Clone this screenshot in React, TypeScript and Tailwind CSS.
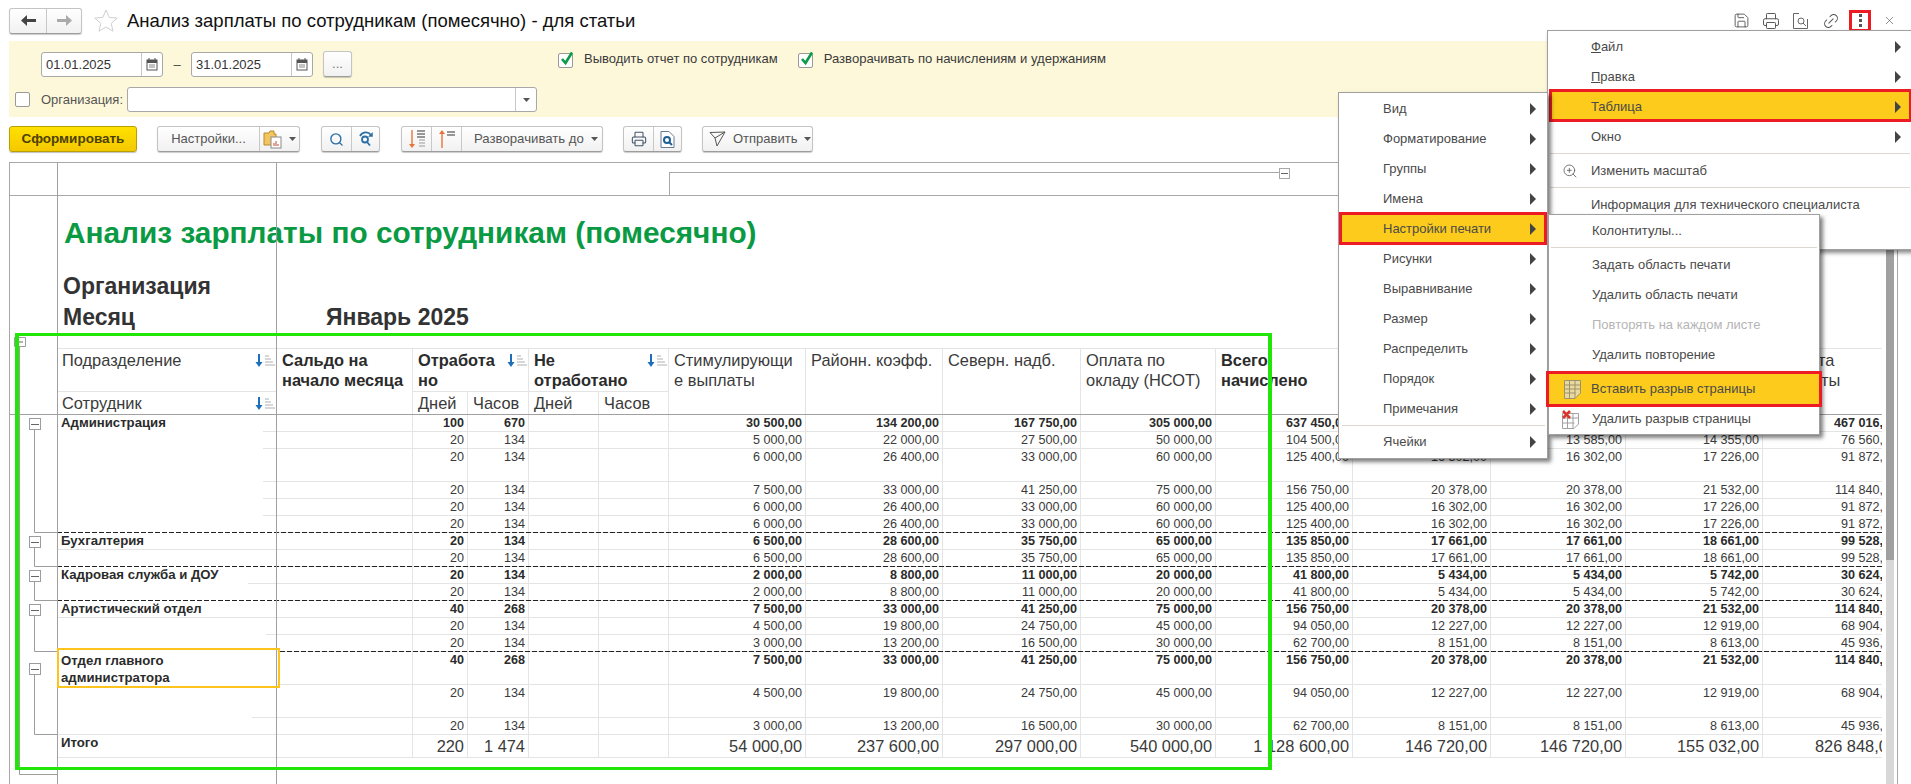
import { Link2, Printer, Save, Search, X, ZoomIn } from "lucide-react";
import type { ReactNode } from "react";

type Row = {
  h: string;
  bold?: boolean;
  big?: boolean;
  label?: string;
  line: string;
  days: string;
  hours: string;
  values: string[];
};

const adminA = ["6 000,00", "26 400,00", "33 000,00", "60 000,00", "125 400,00", "16 302,00", "16 302,00", "17 226,00", "91 872,00"];
const half = ["7 500,00", "33 000,00", "41 250,00", "75 000,00", "156 750,00", "20 378,00", "20 378,00", "21 532,00", "114 840,00"];
const buh = ["6 500,00", "28 600,00", "35 750,00", "65 000,00", "135 850,00", "17 661,00", "17 661,00", "18 661,00", "99 528,00"];
const kadr = ["2 000,00", "8 800,00", "11 000,00", "20 000,00", "41 800,00", "5 434,00", "5 434,00", "5 742,00", "30 624,00"];
const art1 = ["4 500,00", "19 800,00", "24 750,00", "45 000,00", "94 050,00", "12 227,00", "12 227,00", "12 919,00", "68 904,00"];
const art2 = ["3 000,00", "13 200,00", "16 500,00", "30 000,00", "62 700,00", "8 151,00", "8 151,00", "8 613,00", "45 936,00"];

const rows: Row[] = [
  { h: "h-[17px]", bold: true, label: "Администрация", line: "left-[206px]", days: "100", hours: "670", values: ["30 500,00", "134 200,00", "167 750,00", "305 000,00", "637 450,00", "82 869,00", "82 869,00", "87 565,00", "467 016,00"] },
  { h: "h-[17px]", line: "left-[206px]", days: "20", hours: "134", values: ["5 000,00", "22 000,00", "27 500,00", "50 000,00", "104 500,00", "13 585,00", "13 585,00", "14 355,00", "76 560,00"] },
  { h: "h-[33px]", line: "left-[206px]", days: "20", hours: "134", values: adminA },
  { h: "h-[17px]", line: "left-[206px]", days: "20", hours: "134", values: half },
  { h: "h-[17px]", line: "left-[206px]", days: "20", hours: "134", values: adminA },
  { h: "h-[17px]", line: "hidden", days: "20", hours: "134", values: adminA },
  { h: "h-[17px]", bold: true, label: "Бухгалтерия", line: "left-0", days: "20", hours: "134", values: buh },
  { h: "h-[17px]", line: "hidden", days: "20", hours: "134", values: buh },
  { h: "h-[17px]", bold: true, label: "Кадровая служба и ДОУ", line: "left-[191px]", days: "20", hours: "134", values: kadr },
  { h: "h-[17px]", line: "hidden", days: "20", hours: "134", values: kadr },
  { h: "h-[17px]", bold: true, label: "Артистический отдел", line: "left-0", days: "40", hours: "268", values: half },
  { h: "h-[17px]", line: "left-[209px]", days: "20", hours: "134", values: art1 },
  { h: "h-[17px]", line: "hidden", days: "20", hours: "134", values: art2 },
  { h: "h-[33px]", bold: true, line: "hidden", days: "40", hours: "268", values: half },
  { h: "h-[33px]", line: "left-[195px]", days: "20", hours: "134", values: art1 },
  { h: "h-[17px]", line: "left-0", days: "20", hours: "134", values: art2 },
  { h: "h-[23px]", big: true, label: "Итого", line: "left-0", days: "220", hours: "1 474", values: ["54 000,00", "237 600,00", "297 000,00", "540 000,00", "1 128 600,00", "146 720,00", "146 720,00", "155 032,00", "826 848,00"] },
];

const menuMain = ["Вид", "Форматирование", "Группы", "Имена"];
const menuRest = ["Рисунки", "Выравнивание", "Размер", "Распределить", "Порядок", "Примечания"];

function Arrow({ className = "" }: { className?: string }) {
  return (
    <svg className={`h-[12px] w-[6px] shrink-0 ${className}`} viewBox="0 0 6 12">
      <path d="M0 0l6 6-6 6z" fill="#444" />
    </svg>
  );
}

function Caret() {
  return (
    <svg className="h-[4px] w-[7px] shrink-0" viewBox="0 0 7 4">
      <path d="M0 0h7L3.5 4z" fill="#555" />
    </svg>
  );
}

function Calendar() {
  return (
    <svg className="h-[13px] w-[12px]" viewBox="0 0 12 13">
      <rect x="1" y="2" width="10" height="10" fill="#fff" stroke="#555" />
      <rect x="1" y="2" width="10" height="3" fill="#555" />
      <path d="M3 0v3M9 0v3" stroke="#555" />
      <path d="M3 7h6M3 9h6" stroke="#888" />
    </svg>
  );
}

function Check() {
  return (
    <span className="relative block h-[15px] w-[15px] rounded-[2px] border border-[#9a9a9a] bg-white">
      <svg className="absolute -top-[3px] left-[1px] h-[15px] w-[14px]" viewBox="0 0 14 15">
        <path d="M2 8l3.5 4L12 1.5" fill="none" stroke="#0a9a4a" strokeWidth="2.6" />
      </svg>
    </span>
  );
}

function SortIcon() {
  return (
    <svg className="absolute right-[1px] top-[5px] h-[13px] w-[20px]" viewBox="0 0 20 13">
      <path d="M4 0v10" stroke="#1c6fb8" strokeWidth="2" />
      <path d="M0.5 8l3.5 5 3.5-5z" fill="#1c6fb8" />
      <path d="M10 2h4M10 5h6M10 8h8M10 11h10" stroke="#b0b0b0" />
    </svg>
  );
}

function Btn({ className = "", children }: { className?: string; children: ReactNode }) {
  return (
    <div className={`flex h-[26px] items-center overflow-hidden rounded-[3px] border border-[#c4c4c4] border-b-[#9c9c9c] bg-gradient-to-b from-white to-[#f1f1f1] shadow-[0_1px_1px_rgba(0,0,0,0.2)] ${className}`}>
      {children}
    </div>
  );
}

function Part({ className = "", children }: { className?: string; children: ReactNode }) {
  return <div className={`flex h-full items-center justify-center border-r border-[#c8c8c8] last:border-r-0 ${className}`}>{children}</div>;
}

function MenuRow({ icon, arrow, muted, children }: { icon?: ReactNode; arrow?: boolean; muted?: boolean; children: ReactNode }) {
  return (
    <div className={`flex h-[30px] items-center ${muted ? "text-[#b5b5b5]" : "text-[#4a4a4a]"}`}>
      <span className="flex w-[43px] shrink-0 justify-center">{icon}</span>
      <span className="flex-1 whitespace-nowrap">{children}</span>
      {arrow && <Arrow className="mr-[11px]" />}
    </div>
  );
}

function Cell({ row, value, last }: { row: Row; value: string; last?: boolean }) {
  const weight = row.bold ? "font-bold text-[#2b2b2b]" : "text-[#3a3a3a]";
  const size = row.big ? "text-[16.4px] leading-[22px]" : "text-[12.6px] leading-[16px]";
  return (
    <td className={`whitespace-nowrap border-b border-[#e4e4e4] p-0 pr-[3px] text-right align-top ${last ? "" : "border-r"} ${weight} ${size}`}>
      {value}
    </td>
  );
}

export default function App() {
  const head = "border-b border-r border-t border-[#e4e4e4] p-0 pl-[5px] pt-[1px] text-left align-top text-[16.4px] leading-[20px] font-normal text-[#3a3a3a]";
  const headBold = "border-b border-r border-t border-[#e4e4e4] p-0 pl-[5px] pt-[1px] text-left align-top text-[16.4px] leading-[20px] font-bold text-[#2b2b2b]";
  const sub = "border-b border-r border-[#e4e4e4] border-b-[#a0a0a0] p-0 pl-[5px] text-left align-middle text-[16.4px] leading-[20px] font-normal text-[#3a3a3a]";

  return (
    <div className="relative h-[784px] w-[1911px] overflow-hidden bg-white font-['Liberation_Sans',sans-serif] text-[13px] text-[#4a4a4a]">
      {/* Title bar */}
      <header className="flex h-[41px] items-center pl-[9px] pr-[15px]">
        <Btn className="h-[24px] w-[73px]">
          <Part className="w-[37px]">
            <svg className="h-[11px] w-[15px]" viewBox="0 0 15 11">
              <path d="M0 5.5L6 0v4h9v3H6v4z" fill="#444" />
            </svg>
          </Part>
          <Part className="flex-1">
            <svg className="h-[11px] w-[15px]" viewBox="0 0 15 11">
              <path d="M15 5.5L9 0v4H0v3h9v4z" fill="#aaa" />
            </svg>
          </Part>
        </Btn>
        <svg className="ml-[12px] h-[23px] w-[24px]" viewBox="0 0 24 23">
          <path d="M12 1l3.2 7.4 8 .7-6 5.3 1.8 7.8L12 18l-7 4.2 1.8-7.8-6-5.3 8-.7z" fill="none" stroke="#cfcfcf" />
        </svg>
        <h1 className="ml-[9px] text-[18.5px] font-normal text-[#111]">Анализ зарплаты по сотрудникам (помесячно) - для статьи</h1>
        <div className="ml-auto flex items-center text-[#555]">
          <Save size={17} strokeWidth={1.3} />
          <Printer size={18} strokeWidth={1.3} className="ml-[12px]" />
          <svg className="ml-[13px] h-[16px] w-[15px]" viewBox="0 0 15 16" fill="none" stroke="#666">
            <path d="M6 .5H.5v15h14V6" />
            <circle cx="8" cy="8" r="3" />
            <path d="M10 10l3 3" />
          </svg>
          <Link2 size={18} strokeWidth={1.3} className="ml-[14px] -rotate-45" />
          <div className="ml-[9px] flex h-[22px] w-[22px] flex-col items-center justify-center gap-[2px] border-[3px] border-[#ed1c24] bg-white">
            <span className="h-[3px] w-[3px] bg-[#555]" />
            <span className="h-[3px] w-[3px] bg-[#555]" />
            <span className="h-[3px] w-[3px] bg-[#555]" />
          </div>
          <X size={13} strokeWidth={1.2} className="ml-[12px]" />
        </div>
      </header>

      {/* Filters */}
      <section className="ml-[9px] h-[76px] bg-[#fef8da] pt-[11px]">
        <div className="flex h-[25px] items-start pl-[32px]">
          <div className="flex h-[25px] w-[122px] items-center rounded-[3px] border border-[#a8a8a8] bg-white pl-[4px]">
            <span className="flex-1 text-[#333]">01.01.2025</span>
            <span className="flex h-full w-[21px] items-center justify-center border-l border-[#c8c8c8]">
              <Calendar />
            </span>
          </div>
          <span className="mt-[3px] w-[28px] text-center">–</span>
          <div className="flex h-[25px] w-[122px] items-center rounded-[3px] border border-[#a8a8a8] bg-white pl-[4px]">
            <span className="flex-1 text-[#333]">31.01.2025</span>
            <span className="flex h-full w-[21px] items-center justify-center border-l border-[#c8c8c8]">
              <Calendar />
            </span>
          </div>
          <Btn className="-mt-px ml-[10px] w-[29px] justify-center text-[#777]">...</Btn>
          <div className="ml-[206px] flex items-center">
            <Check />
            <span className="ml-[11px] -mt-[3px] text-[#3a3a3a]">Выводить отчет по сотрудникам</span>
          </div>
          <div className="ml-[20px] flex items-center">
            <Check />
            <span className="ml-[11px] -mt-[3px] text-[13.1px] text-[#3a3a3a]">Разворачивать по начислениям и удержаниям</span>
          </div>
        </div>
        <div className="mt-[10px] flex h-[25px] items-center pl-[6px]">
          <span className="h-[15px] w-[15px] rounded-[2px] border border-[#9a9a9a] bg-white" />
          <span className="ml-[11px] w-[86px] text-[#555]">Организация:</span>
          <div className="flex h-[25px] w-[410px] items-center justify-end rounded-[3px] border border-[#a8a8a8] bg-white">
            <span className="flex h-full w-[21px] items-center justify-center border-l border-[#c8c8c8]">
              <Caret />
            </span>
          </div>
        </div>
      </section>

      {/* Toolbar */}
      <nav className="mt-[9px] flex h-[26px] items-center pl-[9px]">
        <div className="flex h-[26px] w-[128px] items-center justify-center rounded-[3px] border border-[#b8a000] bg-gradient-to-b from-[#ffe100] to-[#f4c800] text-[13.5px] font-bold text-[#4d4000] shadow-[0_1px_1px_rgba(0,0,0,0.25)]">
          Сформировать
        </div>
        <Btn className="ml-[20px] w-[143px]">
          <Part className="w-[102px] text-[#555]">Настройки...</Part>
          <Part className="flex-1 gap-[6px]">
            <svg className="h-[19px] w-[20px]" viewBox="0 0 20 19">
              <path d="M1 3h5l1-2h4v3h2v11H1z" fill="#f2c560" stroke="#b98a2a" />
              <rect x="8" y="7" width="10" height="11" fill="#fff" stroke="#8a8a8a" />
              <path d="M11 16v-3M13 16v-5M15 16v-2" stroke="#c04a2a" />
            </svg>
            <Caret />
          </Part>
        </Btn>
        <Btn className="ml-[21px] w-[59px]">
          <Part className="w-[30px]">
            <Search size={15} strokeWidth={2.2} color="#2b6ea6" />
          </Part>
          <Part className="flex-1">
            <svg className="h-[16px] w-[16px]" viewBox="0 0 16 16" fill="none" stroke="#2b6ea6" strokeWidth="1.8">
              <path d="M2 5a6.5 6.5 0 0 1 11-1" />
              <path d="M14.5 1.5v4h-4z" fill="#2b6ea6" strokeWidth="0.5" />
              <circle cx="7" cy="8.5" r="3" />
              <path d="M9 11l3 3.5" />
            </svg>
          </Part>
        </Btn>
        <Btn className="ml-[21px] w-[202px]">
          <Part className="w-[30px]">
            <svg className="h-[20px] w-[18px]" viewBox="0 0 18 20">
              <path d="M4 1v16" stroke="#e8743b" strokeWidth="1.4" />
              <path d="M1 15l3 4 3-4z" fill="#e8743b" />
              <path d="M9 2h8M9 5h8M9 8h8" stroke="#333" />
              <path d="M11 11h6M11 14h6M11 17h6" stroke="#999" />
            </svg>
          </Part>
          <Part className="w-[30px]">
            <svg className="h-[20px] w-[18px]" viewBox="0 0 18 20">
              <path d="M4 3v16" stroke="#e8743b" strokeWidth="1.4" />
              <path d="M1 5l3-4 3 4z" fill="#e8743b" />
              <path d="M9 3h8M9 6h8" stroke="#333" />
            </svg>
          </Part>
          <Part className="flex-1 justify-start gap-[7px] pl-[12px] text-[13.2px] text-[#555]">
            Разворачивать до
            <Caret />
          </Part>
        </Btn>
        <Btn className="ml-[20px] w-[59px]">
          <Part className="w-[30px]">
            <Printer size={16} strokeWidth={1.6} color="#44566a" />
          </Part>
          <Part className="flex-1">
            <svg className="h-[17px] w-[15px]" viewBox="0 0 15 17" fill="none">
              <path d="M1 .5h8l5 5v11H1z" stroke="#6a7d90" fill="#fff" />
              <circle cx="7" cy="9" r="3" stroke="#1f5f96" strokeWidth="2" />
              <path d="M9 11l3 3" stroke="#1f5f96" strokeWidth="2" />
            </svg>
          </Part>
        </Btn>
        <Btn className="ml-[20px] w-[111px] gap-[7px] pl-[6px] text-[#555]">
          <svg className="h-[16px] w-[17px]" viewBox="0 0 17 16" fill="none" stroke="#555">
            <path d="M1 1.5L16 1 8 15 6 7z" />
            <path d="M6 7l10-6" />
          </svg>
          Отправить
          <Caret />
        </Btn>
      </nav>

      {/* Spreadsheet */}
      <main className="ml-[9px] mt-[10px] flex h-[622px] w-[1889px] border-l border-r border-t border-[#a8a8a8]">
        <div className="relative w-[1872px] shrink-0 overflow-hidden">
          <div className="h-[33px] border-b border-[#a8a8a8] pt-[9px]">
            <div className="relative ml-[659px] h-[23px] w-[610px] border-l border-t border-[#a8a8a8]">
              <span className="absolute -right-[11px] -top-[5px] flex h-[11px] w-[11px] items-center justify-center border border-[#a8a8a8] bg-white">
                <span className="h-px w-[7px] bg-[#666]" />
              </span>
            </div>
          </div>

          <div className="flex h-[74px] items-center pl-[54px] pt-[1px] text-[29.8px] font-bold text-[#0a9a44]">
            Анализ зарплаты по сотрудникам (помесячно)
          </div>
          <div className="flex h-[32px] items-center pl-[53px] text-[23px] font-bold text-[#333]">Организация</div>
          <div className="flex h-[30px] items-center pl-[53px] text-[23px] font-bold text-[#333]">
            <span className="w-[263px]">Месяц</span>
            <span>Январь 2025</span>
          </div>
          <div className="h-[16px]" />

          <table className="ml-[47px] w-[1823px] table-fixed border-separate border-spacing-0">
            <colgroup>
              <col className="w-[220px]" />
              <col className="w-[136px]" />
              <col className="w-[55px]" />
              <col className="w-[61px]" />
              <col className="w-[70px]" />
              <col className="w-[70px]" />
              <col className="w-[137px]" />
              <col className="w-[137px]" />
              <col className="w-[138px]" />
              <col className="w-[135px]" />
              <col className="w-[137px]" />
              <col className="w-[138px]" />
              <col className="w-[135px]" />
              <col className="w-[137px]" />
              <col className="w-[137px]" />
            </colgroup>
            <thead>
              <tr className="h-[44px]">
                <th className={`relative ${head}`}>
                  Подразделение
                  <SortIcon />
                </th>
                <th rowSpan={2} className={`${headBold} border-b-[#a0a0a0]`}>
                  Сальдо на
                  <br />
                  начало месяца
                </th>
                <th colSpan={2} className={`relative ${headBold}`}>
                  Отработа
                  <br />
                  но
                  <SortIcon />
                </th>
                <th colSpan={2} className={`relative ${headBold}`}>
                  Не
                  <br />
                  отработано
                  <SortIcon />
                </th>
                <th rowSpan={2} className={`${head} border-b-[#a0a0a0]`}>
                  Стимулирующи
                  <br />е выплаты
                </th>
                <th rowSpan={2} className={`${head} border-b-[#a0a0a0]`}>Районн. коэфф.</th>
                <th rowSpan={2} className={`${head} border-b-[#a0a0a0]`}>Северн. надб.</th>
                <th rowSpan={2} className={`${head} border-b-[#a0a0a0]`}>
                  Оплата по
                  <br />
                  окладу (НСОТ)
                </th>
                <th rowSpan={2} className={`${headBold} border-b-[#a0a0a0]`}>
                  Всего
                  <br />
                  начислено
                </th>
                <th rowSpan={2} className={`${head} border-b-[#a0a0a0]`}>НДФЛ</th>
                <th rowSpan={2} className={`${head} border-b-[#a0a0a0]`}>Прочие</th>
                <th rowSpan={2} className={`${head} border-b-[#a0a0a0]`}>Удержания</th>
                <th rowSpan={2} className={`${head} border-b-[#a0a0a0]`}>
                  Выплата
                  <br />
                  зарплаты
                </th>
              </tr>
              <tr className="h-[23px]">
                <th className={`relative ${sub}`}>
                  Сотрудник
                  <SortIcon />
                </th>
                <th className={sub}>Дней</th>
                <th className={sub}>Часов</th>
                <th className={sub}>Дней</th>
                <th className={sub}>Часов</th>
              </tr>
            </thead>
            <tbody>
              {rows.map((row, i) => (
                <tr key={i} className={row.h}>
                  <td className="relative whitespace-nowrap p-0 pl-[4px] align-top text-[13.2px] font-bold leading-[16px] text-[#2b2b2b]">
                    {row.label}
                    <span className={`absolute bottom-0 right-0 h-px bg-[#e4e4e4] ${row.line}`} />
                  </td>
                  <td className="border-b border-r border-[#e4e4e4] p-0" />
                  <Cell row={row} value={row.days} />
                  <Cell row={row} value={row.hours} />
                  <td className="border-b border-r border-[#e4e4e4] p-0" />
                  <td className="border-b border-r border-[#e4e4e4] p-0" />
                  {row.values.map((v, j) => (
                    <Cell key={j} row={row} value={v} last={j === row.values.length - 1} />
                  ))}
                </tr>
              ))}
            </tbody>
          </table>

          {/* Outline tree in the gutter, in page coordinates */}
          <svg className="absolute left-0 top-0 h-[621px] w-[47px]" viewBox="10 163 47 621" fill="none" stroke="#9c9c9c">
            <path d="M19.5 346V774.5H57" />
            <path d="M34.5 430V532.5H57M34.5 548V566.5H57M34.5 582V600.5H57M34.5 616V651.5H57M34.5 675V734.5H57" />
            <path d="M14.5 337.5h11v9h-11z" fill="#fff" />
            <path d="M17 342h6" stroke="#666" />
            {[418, 536, 570, 604, 663].map((y) => (
              <g key={y}>
                <rect x="29.5" y={y + 0.5} width="11" height="11" fill="#fff" />
                <path d={`M31 ${y + 6.5}h8`} stroke="#666" />
              </g>
            ))}
          </svg>

          {/* Page break lines */}
          <span className="absolute left-[47px] right-0 top-[369px] h-px bg-[repeating-linear-gradient(90deg,#222_0,#222_5px,transparent_5px,transparent_7px)]" />
          <span className="absolute left-[47px] right-0 top-[403px] h-px bg-[repeating-linear-gradient(90deg,#222_0,#222_5px,transparent_5px,transparent_7px)]" />
          <span className="absolute left-[47px] right-0 top-[437px] h-px bg-[repeating-linear-gradient(90deg,#222_0,#222_5px,transparent_5px,transparent_7px)]" />
          <span className="absolute left-[270px] right-0 top-[488px] h-px bg-[repeating-linear-gradient(90deg,#222_0,#222_5px,transparent_5px,transparent_7px)]" />

          {/* Grey line under the header, sheet columns */}
          <span className="absolute left-0 right-0 top-[251px] h-px bg-[#a0a0a0]" />
          <span className="absolute bottom-0 left-[47px] top-0 w-px bg-[#a0a0a0]" />
          <span className="absolute bottom-0 left-[266px] top-0 w-px bg-[#a0a0a0]" />

          {/* Active cell */}
          <div className="absolute left-[47px] top-[485px] h-[40px] w-[223px] border-2 border-[#fcc41c] pl-[2px] pt-[2px] text-[13.2px] font-bold leading-[17px] text-[#2b2b2b]">
            Отдел главного
            <br />
            администратора
          </div>

          {/* Annotation frame */}
          <div className="absolute left-[5px] top-[170px] h-[437px] w-[1257px] border-x-4 border-y-[3px] border-[#22e608]" />
        </div>

        <div className="ml-[4px] flex w-[8px] flex-col bg-[#d8d8d8]">
          <div className="h-[397px] bg-[#a0a0a0]" />
        </div>
      </main>

      {/* Main menu */}
      <div className="absolute left-[1547px] top-[30px] z-10 h-[220px] w-[366px] border border-[#a0a0a0] bg-white pt-px shadow-[2px_3px_4px_rgba(0,0,0,0.45)]">
        <MenuRow arrow>
          <span className="underline">Ф</span>айл
        </MenuRow>
        <MenuRow arrow>
          <span className="underline">П</span>равка
        </MenuRow>
        <div className="-mt-[3px] ml-px flex h-[33px] items-center border-[3px] border-[#ed1c24] bg-[#fccb1c] pt-[3px] text-[#4a4a4a]">
          <span className="ml-[39px] flex-1">Таблица</span>
          <Arrow className="mr-[8px]" />
        </div>
        <MenuRow arrow>Окно</MenuRow>
        <div className="mx-[2px] mb-[2px] mt-[1px] h-px bg-[#dcd8d0]" />
        <MenuRow icon={<ZoomIn size={16} strokeWidth={1.2} color="#555" />}>Изменить масштаб</MenuRow>
        <div className="mx-[2px] mb-[2px] mt-px h-px bg-[#dcd8d0]" />
        <MenuRow>Информация для технического специалиста</MenuRow>
      </div>

      {/* Table submenu */}
      <div className="absolute left-[1338px] top-[92px] z-20 h-[367px] w-[210px] border border-[#a0a0a0] bg-white pl-px pt-px shadow-[3px_3px_4px_rgba(0,0,0,0.5)]">
        {menuMain.map((m) => (
          <MenuRow key={m} arrow>
            {m}
          </MenuRow>
        ))}
        <div className="-mb-px -ml-px -mt-[2px] flex h-[33px] items-center border-[3px] border-[#ed1c24] bg-[#fccb1c] text-[#4a4a4a]">
          <span className="ml-[41px] flex-1">Настройки печати</span>
          <Arrow className="mr-[8px]" />
        </div>
        {menuRest.map((m) => (
          <MenuRow key={m} arrow>
            {m}
          </MenuRow>
        ))}
        <div className="mx-[2px] mb-px mt-px h-px bg-[#dcd8d0]" />
        <MenuRow arrow>Ячейки</MenuRow>
      </div>

      {/* Print settings submenu */}
      <div className="absolute left-[1548px] top-[214px] z-30 h-[221px] w-[272px] border border-[#a0a0a0] bg-white pt-px shadow-[3px_3px_4px_rgba(0,0,0,0.5)]">
        <MenuRow>Колонтитулы...</MenuRow>
        <div className="mx-[2px] mb-[2px] mt-px h-px bg-[#dcd8d0]" />
        <MenuRow>Задать область печати</MenuRow>
        <MenuRow>Удалить область печати</MenuRow>
        <MenuRow muted>Повторять на каждом листе</MenuRow>
        <MenuRow>Удалить повторение</MenuRow>
        <div className="relative z-10 -mx-[3px] -mb-[3px] mt-px flex h-[36px] items-center border-[3px] border-[#ed1c24] bg-[#fccb1c] text-[#4a4a4a]">
          <svg className="ml-[15px] h-[19px] w-[17px]" viewBox="0 0 17 19" fill="#e8d9a0" stroke="#a09268">
            <path d="M.5.5h16V13L11 18.5H.5z" />
            <path d="M.5 5h16M.5 9h16M.5 13h11M5.5.5v18M11 .5v18" />
          </svg>
          <span className="ml-[10px]">Вставить разрыв страницы</span>
        </div>
        <MenuRow
          icon={
            <svg className="h-[19px] w-[17px]" viewBox="0 0 17 19" fill="#fff" stroke="#a0a0a0">
              <path d="M.5 3.5h16V14L12 18.5H.5z" />
              <path d="M.5 8h16M.5 13h12M5.5 3.5v15M11 3.5v15" />
              <path d="M1 1l7 7M8 1L1 8" stroke="#d8362a" strokeWidth="2.6" />
            </svg>
          }
        >
          Удалить разрыв страницы
        </MenuRow>
      </div>
    </div>
  );
}
